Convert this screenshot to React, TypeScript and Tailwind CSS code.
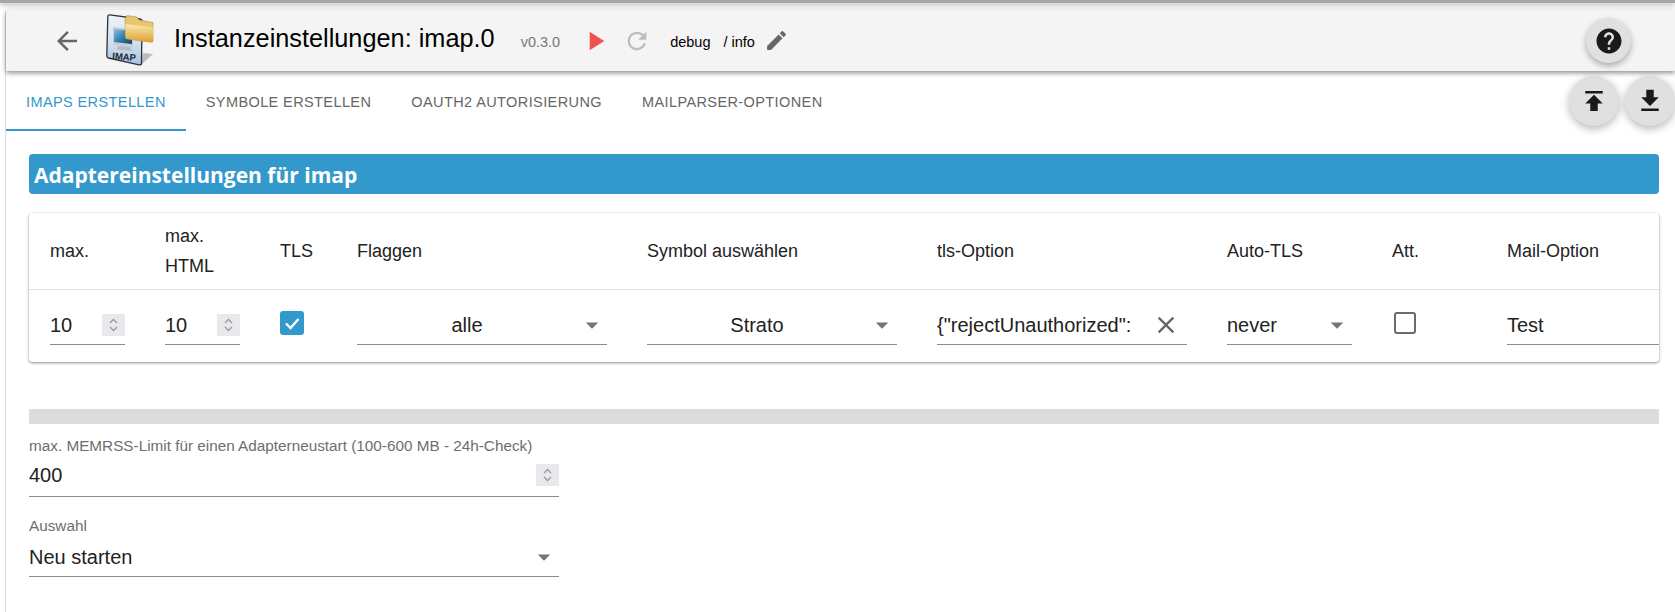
import React from 'react'

const ICONS = {
  back: 'M20 11H7.83l5.59-5.59L12 4l-8 8 8 8 1.41-1.41L7.83 13H20v-2z',
  play: 'M8 5v14l11-7z',
  refresh:
    'M17.65 6.35C16.2 4.9 14.21 4 12 4c-4.42 0-7.99 3.58-7.99 8s3.57 8 7.99 8c3.73 0 6.84-2.55 7.73-6h-2.08c-.82 2.33-3.04 4-5.65 4-3.31 0-6-2.69-6-6s2.69-6 6-6c1.66 0 3.14.69 4.22 1.78L13 11h7V4l-2.35 2.35z',
  edit: 'M3 17.25V21h3.75L17.81 9.94l-3.75-3.75L3 17.25zM20.71 7.04c.39-.39.39-1.02 0-1.41l-2.34-2.34c-.39-.39-1.02-.39-1.41 0l-1.83 1.83 3.75 3.75 1.83-1.83z',
  help: 'M12 2C6.48 2 2 6.48 2 12s4.48 10 10 10 10-4.48 10-10S17.52 2 12 2zm1 17h-2v-2h2v2zm2.07-7.75l-.9.92C13.45 12.9 13 13.5 13 15h-2v-.5c0-1.1.45-2.1 1.17-2.83l1.24-1.26c.37-.36.59-.86.59-1.41 0-1.1-.9-2-2-2s-2 .9-2 2H8c0-2.21 1.79-4 4-4s4 1.79 4 4c0 .88-.36 1.68-.93 2.25z',
  upload: 'M5 4v2h14V4H5zm0 10h4v6h6v-6h4l-7-7-7 7z',
  download: 'M19 9h-4V3H9v6H5l7 7 7-7zM5 18v2h14v-2H5z',
  clear:
    'M19 6.41L17.59 5 12 10.59 6.41 5 5 6.41 10.59 12 5 17.59 6.41 19 12 13.41 17.59 19 19 17.59 13.41 12z',
  drop: 'M7 10l5 5 5-5z'
}

const Icon = ({ d, className }: { d: string; className: string }) => (
  <svg viewBox="0 0 24 24" fill="currentColor" className={className}>
    <path d={d} />
  </svg>
)

// Adapter logo: page with monitor and folder
const ImapLogo = () => (
  <svg viewBox="0 0 48 52" className="w-[48px] h-[52px]">
    <defs>
      <linearGradient id="page" x1="0" y1="0" x2="0" y2="1">
        <stop offset="0" stopColor="#eef3f8" />
        <stop offset="0.55" stopColor="#d3e2f0" />
        <stop offset="1" stopColor="#a4c4e2" />
      </linearGradient>
      <linearGradient id="folder" x1="0" y1="0" x2="0" y2="1">
        <stop offset="0" stopColor="#fbe9ae" />
        <stop offset="1" stopColor="#d9a02c" />
      </linearGradient>
      <linearGradient id="screen" x1="0" y1="0" x2="1" y2="1">
        <stop offset="0" stopColor="#8fc0e0" />
        <stop offset="0.5" stopColor="#2f7fb4" />
        <stop offset="1" stopColor="#0f4067" />
      </linearGradient>
    </defs>
    <path d="M35 51 L47 40 L37 39z" fill="#bcbcbc" />
    <path d="M4 0.800 L34 5 Q36 5.300 36 7 L35.500 49 Q35.500 51.300 33 50.800 L2.500 44 Q0.800 43.600 0.800 42 L1.800 2.500 Q2 0.600 4 0.800z" fill="url(#page)" stroke="#2b323c" strokeWidth="1.3" />
    <path d="M7 13 L27 15 L27 33 L7 31z" fill="#c9cdd2" />
    <path d="M8 15 L26 17 L26 30 L8 28z" fill="url(#screen)" />
    <path d="M12 32 L24 33 L26 37 L11 35.500z" fill="#b4bac0" />
    <path d="M19 5 L21 1.500 L31 3 L33 6 L47 8.500 L47 27 Q47 28.500 45.500 28.300 L21 25 Q19.500 24.800 19.500 23z" fill="#e9c56e" stroke="#a87c22" strokeWidth="0.5" />
    <path d="M19.500 10 L47 13.500 L47 27 Q47 28.500 45.500 28.300 L21 25 Q19.500 24.800 19.500 23z" fill="url(#folder)" />
    <text x="6" y="45" fontSize="9.500" fontWeight="700" fill="#1d2530" fontFamily="Liberation Sans, sans-serif" transform="rotate(5 6 45)">
      IMAP
    </text>
  </svg>
)

const Spinner = () => (
  <div className="w-[23px] h-[22px] bg-[#e8e8ed] flex items-center justify-center shrink-0">
    <svg viewBox="0 0 23 22" className="w-[23px] h-[22px]" fill="none" stroke="#9a9aa2" strokeWidth="1.3">
      <path d="M8 9 L11.500 5.500 L15 9" />
      <path d="M8 13 L11.500 16.500 L15 13" />
    </svg>
  </div>
)

const Field = ({ children, className = '' }: { children: React.ReactNode; className?: string }) => (
  <div className={`flex items-center border-b border-[#8c8c8c] text-[20px] text-[#222] ${className}`}>
    {children}
  </div>
)

const Caret = ({ className = '' }: { className?: string }) => (
  <Icon d={ICONS.drop} className={`w-[30px] h-[30px] text-[#757575] shrink-0 ${className}`} />
)

const tabs = ['Imaps erstellen', 'Symbole erstellen', 'OAuth2 Autorisierung', 'Mailparser-Optionen']

const columns = ['max.', 'max. HTML', 'TLS', 'Flaggen', 'Symbol auswählen', 'tls-Option', 'Auto-TLS', 'Att.', 'Mail-Option']

const cellField = 'h-[32px] pb-[8px] justify-between'

export default function App() {
  return (
    <div className="h-[612px] w-full overflow-hidden bg-white font-['Liberation_Sans',Arial,sans-serif]">
      <div className="h-[3px] bg-[#a6a6a6] shadow-[0_2px_5px_rgba(0,0,0,0.35)]" />

      <div className="ml-[5px] mt-[7px] h-[602px] border-l border-[#dcdcdc]">
        {/* Toolbar */}
        <div className="h-[61px] flex items-center bg-[#f4f4f4] shadow-[0_2px_5px_rgba(0,0,0,0.45)] rounded-tl-[4px] relative z-10">
          <Icon d={ICONS.back} className="w-[30px] h-[30px] ml-[46px] text-[#666]" />
          <div className="ml-[24px] mt-[-1px]">
            <ImapLogo />
          </div>
          <h1 className="ml-[20px] text-[25.3px] text-black leading-none mt-[-3px]">Instanzeinstellungen: imap.0</h1>
          <span className="ml-[26px] mt-[4px] text-[14.5px] text-[#777]">v0.3.0</span>
          <Icon d={ICONS.play} className="w-[32px] h-[32px] ml-[19px] text-[#ef5350]" />
          <Icon d={ICONS.refresh} className="w-[28px] h-[28px] ml-[12px] text-[#bdbdbd]" />
          <span className="ml-[19px] mt-[4px] text-[14.5px] text-black">debug</span>
          <span className="ml-[13px] mt-[4px] text-[14.5px] text-black">/ info</span>
          <Icon d={ICONS.edit} className="w-[25px] h-[25px] ml-[9px] text-[#666]" />
          <div className="ml-auto mr-[44px] w-[45px] h-[45px] rounded-full bg-[#e0e0e0] flex items-center justify-center shadow-[0_3px_6px_rgba(0,0,0,0.3)]">
            <Icon d={ICONS.help} className="w-[30px] h-[30px] text-[#1a1a1a]" />
          </div>
        </div>

        {/* Tabs */}
        <div className="h-[60px] flex">
          {tabs.map((tab, i) => (
            <div
              key={tab}
              className={`h-[60px] px-[20px] pt-[5px] flex items-center uppercase text-[14.5px] tracking-[0.4px] border-b-2 ${
                i === 0 ? 'text-[#3399cc] border-[#3399cc]' : 'text-[#666] border-transparent'
              }`}
            >
              {tab}
            </div>
          ))}
          <div className="ml-auto mt-[5px] flex gap-[6px]">
            {[ICONS.upload, ICONS.download].map(d => (
              <div
                key={d}
                className="w-[50px] h-[50px] rounded-full bg-[#e0e0e0] flex items-center justify-center shadow-[0_3px_8px_rgba(0,0,0,0.28)]"
              >
                <Icon d={d} className="w-[30px] h-[30px] text-[#1a1a1a]" />
              </div>
            ))}
          </div>
        </div>

        <div className="pl-[23px] pr-[16px] pt-[23px]">
          <div className="h-[40px] bg-[#3399cc] rounded-[4px] flex items-center pl-[5px] pt-[3px] text-white text-[21px] font-bold font-['Open_Sans',sans-serif]">
            Adaptereinstellungen für imap
          </div>

          {/* Instances table */}
          <div className="mt-[19px] h-[149px] bg-white rounded-[4px] overflow-hidden shadow-[0_1px_3px_rgba(0,0,0,0.45)]">
            <div className="grid grid-cols-[116px_115px_77px_290px_290px_290px_165px_115px_172px] h-[77px] border-b border-[#e0e0e0] items-center text-[18px] leading-[30px] text-[#222]">
              {columns.map((col, i) => (
                <div key={col} className={i === 0 ? 'pl-[21px]' : 'pl-[20px]'}>
                  {col === 'max. HTML' ? (
                    <>
                      max.
                      <br />
                      HTML
                    </>
                  ) : (
                    col
                  )}
                </div>
              ))}
            </div>
            <div className="grid grid-cols-[116px_115px_77px_290px_290px_290px_165px_115px_172px] pt-[23px]">
              <div className="pl-[21px] pr-[20px]">
                <Field className={cellField}>
                  10
                  <Spinner />
                </Field>
              </div>
              <div className="pl-[20px] pr-[20px]">
                <Field className={cellField}>
                  10
                  <Spinner />
                </Field>
              </div>
              <div className="pl-[20px]">
                <svg viewBox="0 0 24 24" className="w-[24px] h-[24px] -mt-[2px]">
                  <rect width="24" height="24" rx="3" fill="#3399cc" />
                  <path d="M6 12.500 L10.500 17 L18.500 8" fill="none" stroke="#fff" strokeWidth="2.4" />
                </svg>
              </div>
              <div className="pl-[20px] pr-[20px]">
                <Field className={cellField}>
                  <span className="flex-1 text-center">alle</span>
                  <Caret />
                </Field>
              </div>
              <div className="pl-[20px] pr-[20px]">
                <Field className={cellField}>
                  <span className="flex-1 text-center">Strato</span>
                  <Caret />
                </Field>
              </div>
              <div className="pl-[20px] pr-[20px]">
                <Field className={cellField}>
                  <span className="overflow-hidden whitespace-nowrap">{'{"rejectUnauthorized":'}</span>
                  <Icon d={ICONS.clear} className="w-[28px] h-[28px] text-[#666] shrink-0 mr-[7px]" />
                </Field>
              </div>
              <div className="pl-[20px] pr-[20px]">
                <Field className={cellField}>
                  never
                  <Caret />
                </Field>
              </div>
              <div className="pl-[22px]">
                <div className="w-[22px] h-[22px] -mt-[1px] border-[2.5px] border-[#6b6b6b] rounded-[3px]" />
              </div>
              <div className="pl-[20px]">
                <Field className="h-[32px] pb-[8px]">Test</Field>
              </div>
            </div>
          </div>

          <div className="mt-[47px] h-[15px] bg-[#dcdcdc]" />

          {/* Restart options */}
          <div className="w-[530px]">
            <div className="mt-[13px] text-[15.3px] leading-[18px] text-[#6e6e6e] whitespace-nowrap">
              max. MEMRSS-Limit für einen Adapterneustart (100-600 MB - 24h-Check)
            </div>
            <Field className="justify-between h-[42px] pb-[2px] text-[#111]">
              400
              <Spinner />
            </Field>
            <div className="mt-[20px] text-[15.3px] leading-[18px] text-[#6e6e6e]">Auswahl</div>
            <Field className="justify-between h-[42px] pt-[2px] text-[#111]">
              Neu starten
              <Caret />
            </Field>
          </div>
        </div>
      </div>
    </div>
  )
}
